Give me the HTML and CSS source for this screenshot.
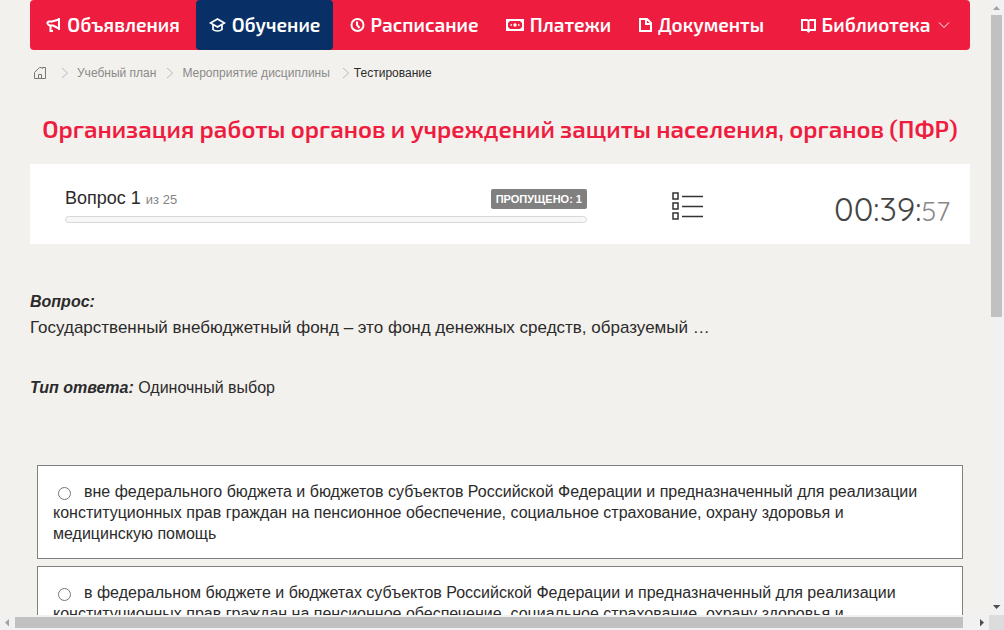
FILE: index.html
```html
<!DOCTYPE html>
<html lang="ru">
<head>
<meta charset="utf-8">
<meta name="viewport" content="width=device-width, initial-scale=1">
<title>Тестирование</title>
<link rel="stylesheet" href="styles.css">
</head>
<body>
<div class="frame">
  <div class="viewport">
    <nav class="menu" aria-label="Главное меню">
      <a class="menu-item" href="#"><svg class="menu-icon" width="15" height="16" viewBox="0 0 15 16"><path d="M13 1v12M13 2.500 6 4.500H3q-2 .5-1.500 2T4 8.500H7L13 11.500M4.500 8.500v5.500h2.500"/></svg>Объявления</a>
      <a class="menu-item active" href="#" aria-current="page"><svg class="menu-icon cap" width="17" height="16" viewBox="0 0 17 16"><path d="M1.500 6 8.500 2l7 4-7 4zM4 8v4.500q1.500 1.500 4.500 1.500t4.500-1.500V8"/></svg>Обучение</a>
      <a class="menu-item" href="#"><svg class="menu-icon" width="15" height="16" viewBox="0 0 15 16"><circle cx="7.500" cy="8" r="6"/><path d="M7 4.500V8l2.500 3"/></svg>Расписание</a>
      <a class="menu-item" href="#"><svg class="menu-icon" width="18" height="16" viewBox="0 0 18 16"><path d="M1 3h16v10H1z"/><path d="M2 4h2L2 6zM16 4h-2l2 2zM2 12h2L2 10zM16 12h-2l2-2z" fill="currentColor" stroke="none"/><circle cx="9" cy="8" r="1.700" fill="currentColor" stroke="none"/><path d="M4.500 8H6M12 8h1.500" stroke-width="1.500"/></svg>Платежи</a>
      <a class="menu-item" href="#"><svg class="menu-icon" width="13" height="16" viewBox="0 0 13 16"><path d="M1 2h7l4 4v8H1zM7 2v5h5"/></svg>Документы</a>
      <a class="menu-item" href="#"><svg class="menu-icon" width="15" height="16" viewBox="0 0 15 16"><path d="M1 3h5l1.500 1L9 3h5v10H9l-1.500 1.500L6 13H1zM7.500 4v11"/></svg>Библиотека<svg class="chevron" width="12" height="8" viewBox="0 0 12 8"><path d="m1 1.500 5 5 5-5"/></svg></a>
    </nav>

    <nav class="crumbs" aria-label="Навигация">
      <a class="crumb home" href="#" aria-label="Главная"><svg class="home-icon" width="14" height="14" viewBox="0 0 14 14"><path d="M1.500 12.500h11v-11H9.500v1L8 1.500H6.500L1.500 6.500zM5.500 12V8.500h3V12"/></svg></a>
      <svg class="arrow" width="8" height="12" viewBox="0 0 8 12"><path d="m1 1 5.500 5L1 11"/></svg>
      <a class="crumb" href="#">Учебный план</a>
      <svg class="arrow" width="8" height="12" viewBox="0 0 8 12"><path d="m1 1 5.500 5L1 11"/></svg>
      <a class="crumb last" href="#">Мероприятие дисциплины</a>
      <svg class="arrow" width="8" height="12" viewBox="0 0 8 12"><path d="m1 1 5.500 5L1 11"/></svg>
      <span class="current">Тестирование</span>
    </nav>

    <main>
      <h1 class="title">Организация работы органов и учреждений защиты населения, органов (ПФР)</h1>

      <section class="status">
        <div class="progress">
          <div class="progress-head">
            <div class="counter">Вопрос 1 <small class="total">из 25</small></div>
            <span class="skipped">ПРОПУЩЕНО: 1</span>
          </div>
          <div class="bar" role="progressbar" aria-label="Прогресс" aria-valuemin="0" aria-valuemax="25" aria-valuenow="0"></div>
        </div>
        <button class="list-button" type="button" aria-label="Список вопросов"><svg width="32" height="28" viewBox="0 0 32 28"><path d="M1 1h5v6H1zM1 11h5v6H1zM1 21h5v6H1zM10 4.500h21M10 14.500h21M10 24.500h21"/></svg></button>
        <div class="timer">00:39:<span class="seconds">57</span></div>
      </section>

      <section class="question">
        <h2 class="label">Вопрос:</h2>
        <p class="question-text">Государственный внебюджетный фонд – это фонд денежных средств, образуемый …</p>
        <p class="answer-type"><strong class="label">Тип ответа:</strong> Одиночный выбор</p>
      </section>

      <form class="answers">
        <label class="answer"><input class="radio" type="radio" name="answer">вне федерального бюджета и бюджетов субъектов Российской Федерации и предназначенный для реализации конституционных прав граждан на пенсионное обеспечение, социальное страхование, охрану здоровья и медицинскую помощь</label>
        <label class="answer"><input class="radio" type="radio" name="answer">в федеральном бюджете и бюджетах субъектов Российской Федерации и предназначенный для реализации конституционных прав граждан на пенсионное обеспечение, социальное страхование, охрану здоровья и</label>
      </form>
    </main>
  </div>
  <div class="scroll vertical" aria-hidden="true">
    <svg class="scroll-arrow" viewBox="0 0 15 15"><path class="muted" d="M7.500 6 11 10H4z"/></svg>
    <div class="track"><div class="thumb"></div></div>
    <svg class="scroll-arrow" viewBox="0 0 15 15"><path d="M4 5h7.500L7.500 9z"/></svg>
  </div>
  <div class="scroll horizontal" aria-hidden="true">
    <svg class="scroll-arrow" viewBox="0 0 15 15"><path class="muted" d="M9 4v7.500L5 7.500z"/></svg>
    <div class="track"><div class="thumb"></div></div>
    <svg class="scroll-arrow" viewBox="0 0 15 15"><path d="M6 4v7.500L10 7.500z"/></svg>
  </div>
  <div class="corner"></div>
</div>
</body>
</html>
```
FILE: styles.css
```css
* { box-sizing: border-box; }

body {
  margin: 0;
  background: #f3f1ed;
  color: #2b2b2b;
  font: 16px/20px "Liberation Sans", Arial, sans-serif;
}

a { color: inherit; text-decoration: none; }
svg { flex: none; fill: none; stroke: currentColor; }

.frame {
  display: grid;
  grid-template: minmax(0, 1fr) 15px / minmax(0, 1fr) 15px;
  height: 100vh;
}

.viewport { overflow: hidden; padding: 0 19px 0 30px; }

.menu {
  display: grid;
  grid-template-columns: 166fr 137fr 162fr 127fr 159fr 189fr;
  height: 50px;
  border-radius: 4px;
  background: #ee1c3e;
  color: #fff;
  font: 600 19px/24px "Exo 2", "Open Sans", sans-serif;
}

.menu-item {
  display: flex;
  align-items: center;
  justify-content: center;
  gap: 6px;
  border-radius: 4px;
  white-space: nowrap;
}

.menu-item.active { background: #083066; }
.menu-icon { stroke-width: 2; }
.menu-icon.cap { stroke-width: 1.7; }
.chevron { margin-left: 2px; }

.crumbs {
  display: flex;
  align-items: center;
  height: 45px;
  padding-left: 3px;
  color: #8a8a8a;
  font-size: 12px;
}

.crumb { margin-right: 10px; }
.crumb.home { display: flex; margin-right: 14px; }
.crumb.last { margin-right: 12px; }
.home-icon { color: #777; }
.arrow { margin-right: 8px; color: #bbb; }
.arrow:last-of-type { margin-right: 4px; }
.current { color: #2b2b2b; }

.title {
  margin: 19px 0 20px;
  color: #ee1c3e;
  font: 600 24px/30px "Exo 2", "Open Sans", sans-serif;
  text-align: center;
  white-space: nowrap;
}

.status {
  display: grid;
  grid-template-columns: minmax(0, 522fr) minmax(0, 202fr) minmax(0, 161fr);
  align-items: center;
  height: 80px;
  padding: 4px 20px 0 35px;
  background: #fff;
}

.progress { padding-bottom: 4px; }

.progress-head {
  display: flex;
  align-items: center;
  justify-content: space-between;
}

.counter { font-size: 18px; line-height: 24px; }
.total { color: #858585; font-size: 13px; }

.skipped {
  padding: 0 5px;
  border-radius: 2px;
  background: #808080;
  color: #fff;
  font-size: 11px;
  font-weight: 700;
  line-height: 20px;
}

.bar {
  height: 7px;
  margin-top: 4px;
  border: 1px solid #d8d8d8;
  border-radius: 4px;
  background: #f7f7f7;
}

.list-button {
  display: flex;
  justify-self: center;
  padding: 0;
  border: 0;
  background: none;
  color: #333;
}

.list-button svg { stroke-width: 1.5; }

.timer {
  padding-top: 8px;
  color: #444;
  font: 400 33px/40px Quicksand, Lato, sans-serif;
  text-align: right;
  white-space: nowrap;
}

.seconds { color: #888; font-size: 27px; }

.question { padding-top: 48px; }
.label { margin: 0; font-size: 16px; font-style: italic; font-weight: 700; }
.question-text { margin: 6px 0 40px; font-size: 17px; }
.answer-type { margin: 0; }

.answers {
  display: flex;
  flex-direction: column;
  gap: 7px;
  padding: 67px 7px 0;
}

.answer {
  display: block;
  min-height: 94px;
  padding: 15px 15px 14px;
  border: 1px solid #808080;
  background: #fff;
  line-height: 21px;
}

.radio {
  width: 13px;
  height: 13px;
  margin: 0 13px 0 5px;
  vertical-align: -3px;
}

.scroll { display: flex; background: #f1f1f1; }
.vertical { flex-direction: column; }
.horizontal { grid-row: 2; }
.scroll-arrow { width: 15px; height: 15px; fill: #505050; stroke: none; }
.muted { fill: #a3a3a3; }
.track { flex: 1; }
.thumb { background: #c1c1c1; }
.vertical .thumb { width: 11px; height: 51.6%; margin-left: 2px; }
.horizontal .thumb { width: 98.9%; height: 11px; margin-top: 2px; }
.corner { background: #dcdcdc; }
```
